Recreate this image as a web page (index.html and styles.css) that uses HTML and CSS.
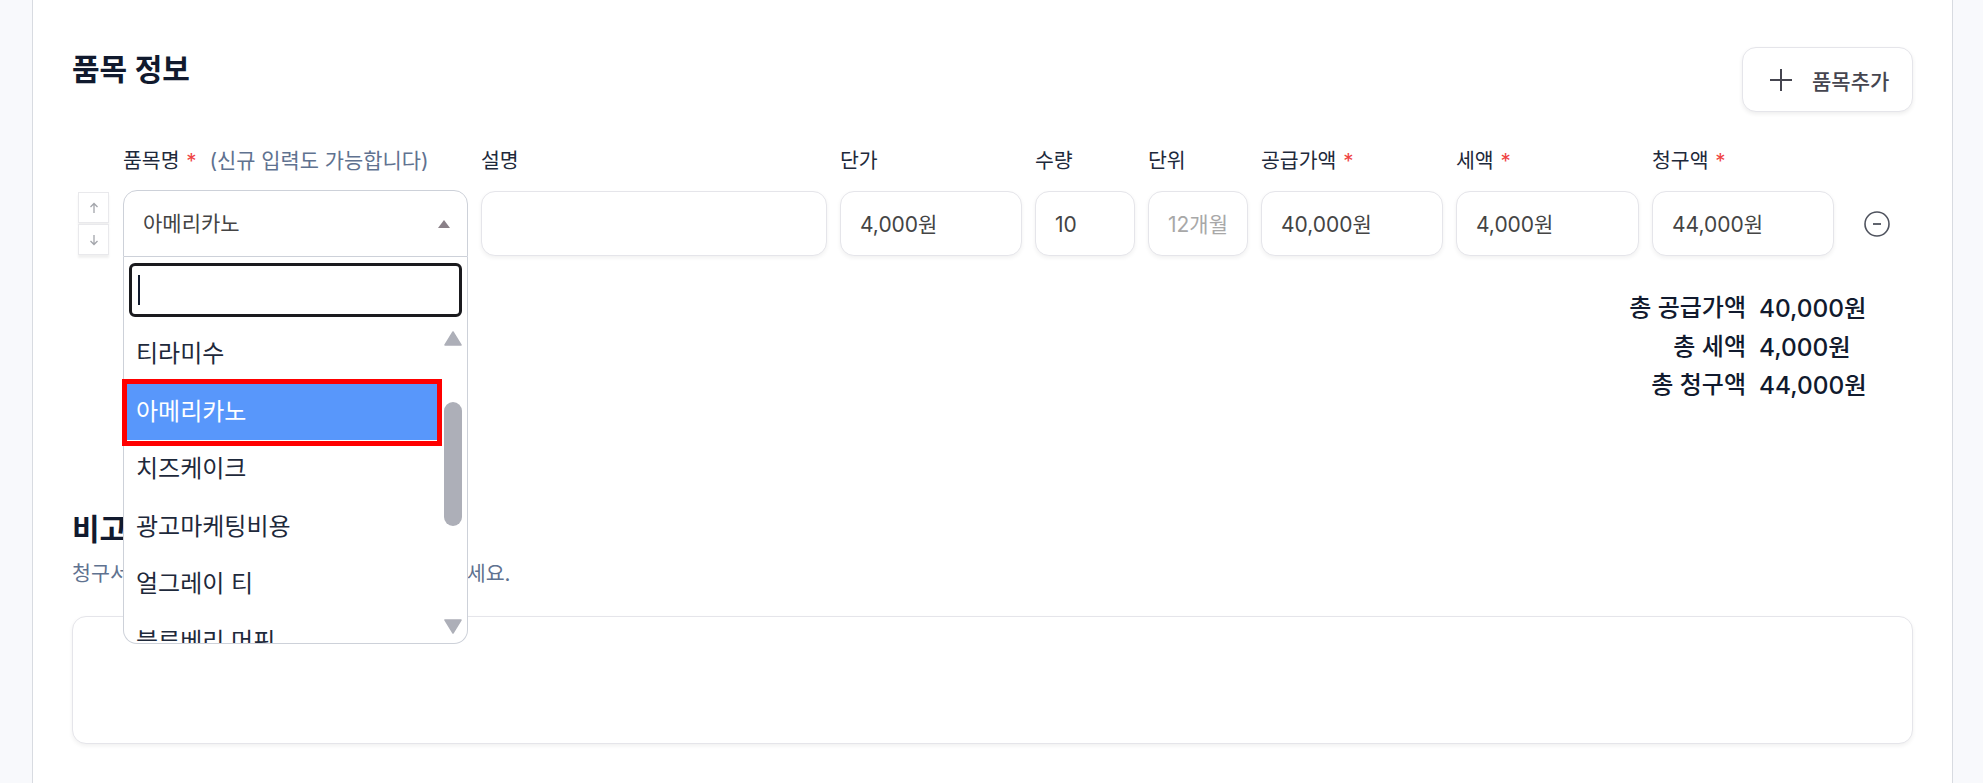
FILE: index.html
```html
<!DOCTYPE html>
<html lang="ko">
<head>
  <meta charset="UTF-8" />
  <title>품목 정보</title>
  <link rel="stylesheet" href="styles.css">
</head>
<body>
  <main class="panel">
    <header class="panel-head">
      <h2 class="title">품목 정보</h2>
      <button class="add-btn" type="button">
        <svg width="22" height="22" viewBox="0 0 22 22"><path d="M11 0v22M0 11h22" stroke="#45454f" stroke-width="2" fill="none"/></svg>
        <span>품목추가</span>
      </button>
    </header>

    <div class="items">
      <div></div>
      <label class="field-label">품목명 <em>*</em> <span class="hint">(신규 입력도 가능합니다)</span></label>
      <label class="field-label">설명</label>
      <label class="field-label">단가</label>
      <label class="field-label">수량</label>
      <label class="field-label">단위</label>
      <label class="field-label">공급가액 <em>*</em></label>
      <label class="field-label">세액 <em>*</em></label>
      <label class="field-label">청구액 <em>*</em></label>
      <div></div>

      <div class="move">
        <button type="button" class="move-btn"><svg width="12" height="12" viewBox="0 0 12 12"><path d="M6 11V1.500M2.500 5 6 1.500 9.500 5" stroke="#a3a5ab" stroke-width="1.300" fill="none"/></svg></button>
        <button type="button" class="move-btn"><svg width="12" height="12" viewBox="0 0 12 12"><path d="M6 1v9.500M2.500 7 6 10.500 9.500 7" stroke="#a3a5ab" stroke-width="1.300" fill="none"/></svg></button>
      </div>

      <div class="select">
        <div class="select-head">
          <span>아메리카노</span>
          <svg width="12" height="8" viewBox="0 0 12 8"><path d="M6 0 12 8H0z" fill="#8a8088"/></svg>
        </div>
        <div class="dropdown">
          <div class="search-wrap"><div class="search"><span class="caret"></span></div></div>
          <div class="options">
            <div class="option">티라미수</div>
            <div class="option selected">아메리카노</div>
            <div class="option">치즈케이크</div>
            <div class="option">광고마케팅비용</div>
            <div class="option">얼그레이 티</div>
            <div class="option">블루베리 머핀</div>
            <svg class="scrollbar" width="18" height="316" viewBox="0 0 18 316">
              <path d="M9 7 17 20H1z" fill="#adafb8" stroke="#adafb8" stroke-width="1.500" stroke-linejoin="round"/>
              <rect y="77" width="18" height="124" rx="9" fill="#adafb8"/>
              <path d="M1 295H17L9 308z" fill="#adafb8" stroke="#adafb8" stroke-width="1.500" stroke-linejoin="round"/>
            </svg>
          </div>
          <div class="mark"></div>
        </div>
      </div>

      <input class="input" type="text" value="">
      <input class="input" type="text" value="4,000원">
      <input class="input qty" type="text" value="10">
      <input class="input muted" type="text" value="12개월">
      <input class="input" type="text" value="40,000원">
      <input class="input" type="text" value="4,000원">
      <input class="input" type="text" value="44,000원">
      <button type="button" class="remove">
        <svg width="26" height="26" viewBox="0 0 26 26"><circle cx="13" cy="13" r="12" stroke="#4f535e" stroke-width="1.600" fill="none"/><path d="M9 13h8" stroke="#4f535e" stroke-width="1.800"/></svg>
      </button>
    </div>

    <div class="totals">
      <span>총 공급가액</span><b>40,000원</b>
      <span>총 세액</span><b>4,000원</b>
      <span>총 청구액</span><b>44,000원</b>
    </div>

    <section class="note">
      <h2 class="title">비고</h2>
      <p class="note-desc">청구서에 표시될 추가 정보 또는 메모를 입력하세요.</p>
      <textarea class="note-box"></textarea>
    </section>
  </main>
</body>
</html>
```

FILE: styles.css
```css
* { box-sizing: border-box; margin: 0; padding: 0; }
html, body {
  height: 100%;
  overflow: hidden;
  background: #f8f9fc;
  font-family: "Inter", "Noto Sans CJK KR", sans-serif;
  color: #1e293b;
}
.panel {
  width: 1921px;
  min-height: 100%;
  margin-left: 32px;
  padding: 47px 39px 0;
  background: #fff;
  border-left: 1px solid #d8dbe1;
  border-right: 1px solid #d8dbe1;
}
.panel-head {
  display: flex;
  justify-content: space-between;
  align-items: flex-start;
}
.title {
  margin-top: 2px;
  font-size: 30px;
  line-height: 40px;
  font-weight: 600;
  color: #111a2e;
}
.add-btn {
  display: flex;
  align-items: center;
  gap: 20px;
  width: 171px;
  height: 65px;
  padding-left: 27px;
  background: #fff;
  border: 1px solid #e5e5ea;
  border-radius: 14px;
  box-shadow: 0 2px 4px rgba(0,0,0,0.07);
  font: 500 21px "Inter", "Noto Sans CJK KR", sans-serif;
  color: #45454f;
}

/* item row */
.items {
  display: grid;
  grid-template-columns: 32px 345px 346px 182px 100px 100px 182px 183px 182px 62px;
  column-gap: 13px;
  margin-left: 6px;
  margin-top: 35px;
  align-items: end;
}
.field-label {
  font-size: 20.5px;
  line-height: 28px;
  font-weight: 400;
  color: #1e293b;
  white-space: nowrap;
  padding-bottom: 15px;
}
.field-label em { color: #ef4444; font-style: normal; margin-left: 1px; }
.hint { color: #5f7290; font-size: 20.9px; margin-left: 7px; }
.move { display: flex; flex-direction: column; gap: 1px; align-self: start; margin-top: 2px; }
.move-btn {
  display: flex;
  align-items: center;
  justify-content: center;
  width: 31px;
  height: 31px;
  background: #fff;
  border: 1px solid #e9e9ec;
  box-shadow: 0 3px 2px rgba(0,0,0,0.06);
}
.input {
  width: 100%;
  height: 65px;
  margin-bottom: 1px;
  padding: 0 19px 2px;
  border: 1px solid #e5e5ea;
  border-radius: 14px;
  box-shadow: 0 2px 4px rgba(0,0,0,0.06);
  font: 400 21px "Inter", "Noto Sans CJK KR", sans-serif;
  color: #444;
  outline: none;
}
.input.qty { padding: 2px 19px 0; }
.input.muted { color: #a8a8a8; }
.remove {
  display: flex;
  justify-content: center;
  align-items: center;
  height: 65px;
  margin-bottom: 1px;
  margin-right: 2px;
  background: none;
  border: none;
}

/* select2 style dropdown, open */
.select { position: relative; }
.select-head {
  display: flex;
  align-items: center;
  justify-content: space-between;
  height: 67px;
  padding: 0 17px 0 19px;
  background: #fff;
  border: 1px solid #cdd1d9;
  border-radius: 14px 14px 0 0;
  font-size: 21px;
  color: #444;
}
.select-head span { margin-bottom: 3px; }
.dropdown {
  position: absolute;
  top: 100%;
  left: 0;
  right: 0;
  z-index: 10;
  height: 387px;
  background: #fff;
  border: 1px solid #cdd1d9;
  border-top: none;
  border-radius: 0 0 14px 14px;
}
.search-wrap { padding: 6px 5px 8px 5px; }
.search {
  display: flex;
  align-items: center;
  height: 54px;
  padding-left: 6px;
  border: 3px solid #1a1a1e;
  border-radius: 6px;
}
.caret { width: 2px; height: 30px; background: #111a2e; }
.options {
  position: relative;
  height: 318px;
  padding-right: 27px;
  overflow: hidden;
  border-radius: 0 0 13px 13px;
}
.option {
  height: 57.5px;
  line-height: 57.5px;
  padding-left: 12px;
  font-size: 24px;
  white-space: nowrap;
  color: #1e293b;
}
.option.selected { background: #5897fb; color: #fff; }
.scrollbar { position: absolute; top: 0; right: 5px; }
.mark {
  position: absolute;
  top: 122px;
  left: -2px;
  width: 320px;
  height: 67px;
  border: 5px solid #f00;
}

/* totals */
.totals {
  display: grid;
  grid-template-columns: auto 109px;
  justify-content: end;
  column-gap: 13px;
  margin-top: 32px;
  padding-right: 45px;
  font-size: 24px;
  line-height: 38.5px;
  font-weight: 500;
  color: #111a2e;
}
.totals span { text-align: right; }
.totals b { font-size: 24.4px; font-weight: 500; }

/* note */
.note { margin-top: 104px; }
.note-desc {
  margin-top: 11px;
  font-size: 20.6px;
  line-height: 28px;
  color: #5f7290;
}
.note-box {
  display: block;
  width: 100%;
  height: 128px;
  margin-top: 28px;
  border: 1px solid #e5e5ea;
  border-radius: 14px;
  box-shadow: 0 2px 4px rgba(0,0,0,0.06);
  resize: none;
  outline: none;
}
```
